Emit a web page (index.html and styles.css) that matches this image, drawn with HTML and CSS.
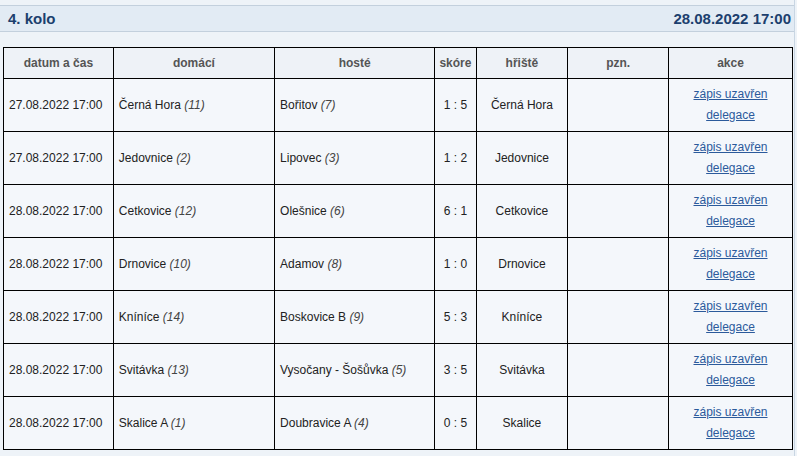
FILE: index.html
```html
<!DOCTYPE html>
<html>
<head>
<meta charset="utf-8">
<link rel="stylesheet" href="styles.css">
</head>
<body>
<div class="page">
  <div class="round-head">
    <span class="round-title">4. kolo</span>
    <span class="round-date">28.08.2022 17:00</span>
  </div>
  <table class="matches">
    <thead>
      <tr>
        <th class="c-date">datum a čas</th>
        <th class="c-home">domácí</th>
        <th class="c-away">hosté</th>
        <th class="c-score">skóre</th>
        <th class="c-field">hřiště</th>
        <th class="c-note">pzn.</th>
        <th class="c-act">akce</th>
      </tr>
    </thead>
    <tbody>
      <tr><td>27.08.2022 17:00</td><td>Černá Hora <i>(11)</i></td><td>Bořitov <i>(7)</i></td><td class="ctr">1 : 5</td><td class="ctr">Černá Hora</td><td></td><td class="ctr"><a href="#">zápis uzavřen</a><br><a href="#">delegace</a></td></tr>
      <tr><td>27.08.2022 17:00</td><td>Jedovnice <i>(2)</i></td><td>Lipovec <i>(3)</i></td><td class="ctr">1 : 2</td><td class="ctr">Jedovnice</td><td></td><td class="ctr"><a href="#">zápis uzavřen</a><br><a href="#">delegace</a></td></tr>
      <tr><td>28.08.2022 17:00</td><td>Cetkovice <i>(12)</i></td><td>Olešnice <i>(6)</i></td><td class="ctr">6 : 1</td><td class="ctr">Cetkovice</td><td></td><td class="ctr"><a href="#">zápis uzavřen</a><br><a href="#">delegace</a></td></tr>
      <tr><td>28.08.2022 17:00</td><td>Drnovice <i>(10)</i></td><td>Adamov <i>(8)</i></td><td class="ctr">1 : 0</td><td class="ctr">Drnovice</td><td></td><td class="ctr"><a href="#">zápis uzavřen</a><br><a href="#">delegace</a></td></tr>
      <tr><td>28.08.2022 17:00</td><td>Kníníce <i>(14)</i></td><td>Boskovice B <i>(9)</i></td><td class="ctr">5 : 3</td><td class="ctr">Kníníce</td><td></td><td class="ctr"><a href="#">zápis uzavřen</a><br><a href="#">delegace</a></td></tr>
      <tr><td>28.08.2022 17:00</td><td>Svitávka <i>(13)</i></td><td>Vysočany - Šošůvka <i>(5)</i></td><td class="ctr">3 : 5</td><td class="ctr">Svitávka</td><td></td><td class="ctr"><a href="#">zápis uzavřen</a><br><a href="#">delegace</a></td></tr>
      <tr><td>28.08.2022 17:00</td><td>Skalice A <i>(1)</i></td><td>Doubravice A <i>(4)</i></td><td class="ctr">0 : 5</td><td class="ctr">Skalice</td><td></td><td class="ctr"><a href="#">zápis uzavřen</a><br><a href="#">delegace</a></td></tr>
    </tbody>
  </table>
</div>
</body>
</html>
```

FILE: styles.css
```css
html, body {
  margin: 0;
  padding: 0;
}
body {
  background: #eef3f8;
  font-family: "Liberation Sans", Arial, sans-serif;
  font-size: 12px;
  color: #222;
}
.page {
  width: 795px;
  border-right: 1px solid #c9d6e3;
  min-height: 456px;
  box-sizing: border-box;
  padding-top: 5px;
}
.round-head {
  display: flex;
  justify-content: space-between;
  align-items: center;
  height: 25px;
  border-top: 1px solid #c3d0dd;
  border-bottom: 1px solid #c3d0dd;
  background: #e2ebf4;
  padding: 0 3px 0 8px;
  font-size: 15px;
  font-weight: bold;
  color: #1c3f6e;
}
.matches {
  margin: 15px 0 0 3px;
  width: 790px;
  border-collapse: collapse;
  background: #f4f7fb;
}
.matches th, .matches td {
  border: 1px solid #000;
  padding: 5px 5px;
  line-height: 21px;
  vertical-align: middle;
}
.matches th {
  height: 22px;
  padding: 4px 4px;
  background: #eef2f7;
  color: #555;
  font-weight: bold;
  font-size: 12px;
  text-align: center;
}
.matches td {
  height: 42px;
  text-align: left;
}
.matches td.ctr {
  text-align: center;
}
.matches i {
  color: #444;
}
.matches a {
  color: #2b5a9b;
  text-decoration: underline;
}
.c-date { width: 100px; }
.c-home { width: 151px; }
.c-away { width: 150px; }
.c-score { width: 32px; }
.c-field { width: 82px; }
.c-note { width: 91px; }
.c-act { width: 114px; }
```
